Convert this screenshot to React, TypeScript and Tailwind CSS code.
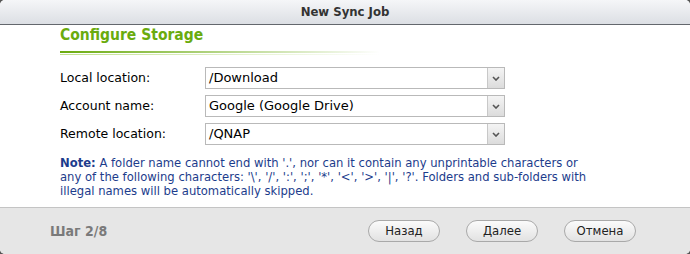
import React from "react";

const body = { fontFamily: '"DejaVu Sans", Verdana, sans-serif' };
const cond = { fontFamily: '"DejaVu Sans Condensed", "DejaVu Sans", sans-serif', fontStretch: "condensed" as const };

function Select({ value }: { value: string }) {
  return (
    <div className="flex h-[22px] w-[300px] border border-[#b9b9b9] bg-white">
      <div className="flex flex-1 items-center pl-[3px] text-[13px] text-black" style={body}>
        {value}
      </div>
      <div className="flex w-[17px] items-center justify-center border-l border-[#c8c8c8] bg-gradient-to-b from-[#f4f4f4] to-[#dcdcdc]">
        <svg width="8" height="5" viewBox="0 0 8 5">
          <path d="M1 1 L4 4 L7 1" stroke="#555" strokeWidth="1.6" fill="none" />
        </svg>
      </div>
    </div>
  );
}

function Btn({ label }: { label: string }) {
  return (
    <div
      className="flex h-[22px] w-[72px] items-center justify-center rounded-full border border-[#a9a9a9] bg-gradient-to-b from-[#fbfbfb] to-[#e2e2e2] text-[13px] text-[#222]"
      style={cond}
    >
      {label}
    </div>
  );
}

export default function App() {
  return (
    <div className="h-[254px] w-[690px] bg-[#555]">
      <div className="flex h-full w-full flex-col overflow-hidden rounded-[5px] bg-white">
        <div
          className="flex h-[25px] shrink-0 items-center justify-center border-b border-[#63676d] bg-gradient-to-b from-[#f5f6f8] to-[#dcdfe4] text-[13px] font-bold text-[#333]"
          style={cond}
        >
          New Sync Job
        </div>
        <div className="flex flex-1 flex-col px-[60px] pt-[1px]">
          <div className="text-[15.5px] font-bold leading-[18px] text-[#6aab0e]" style={cond}>
            Configure Storage
          </div>
          <div className="mt-[7px] h-[2px] w-[320px] bg-gradient-to-r from-[#6aab0e] to-transparent" />
          <div className="mt-[1px] h-[1px] w-[320px] bg-gradient-to-r from-[#c2e08f] to-transparent" />
          <div className="mt-[12px] flex flex-col gap-[6px]">
            {[
              ["Local location:", "/Download"],
              ["Account name:", "Google (Google Drive)"],
              ["Remote location:", "/QNAP"],
            ].map(([l, v]) => (
              <div key={l} className="flex items-center">
                <div className="w-[145px] text-[12.5px] text-black" style={body}>
                  {l}
                </div>
                <Select value={v} />
              </div>
            ))}
          </div>
          <div className="mt-[11px] whitespace-nowrap text-[11.6px] leading-[14px] text-[#1c3c8c]" style={body}>
            <b>Note:</b> A folder name cannot end with '.', nor can it contain any unprintable characters or
            <br />
            any of the following characters: '\', '/', ':', ';', '*', '&lt;', '&gt;', '|', '?'. Folders and sub-folders with
            <br />
            illegal names will be automatically skipped.
          </div>
        </div>
        <div className="flex h-[47px] shrink-0 items-center border-t border-[#c4c4c4] bg-[#e6e6e6] pl-[50px] pr-[54px]">
          <div className="flex-1 text-[14px] font-bold text-[#7a7a7a]" style={cond}>
            Шаг 2/8
          </div>
          <div className="flex gap-[26px]">
            <Btn label="Назад" />
            <Btn label="Далее" />
            <Btn label="Отмена" />
          </div>
        </div>
      </div>
    </div>
  );
}
